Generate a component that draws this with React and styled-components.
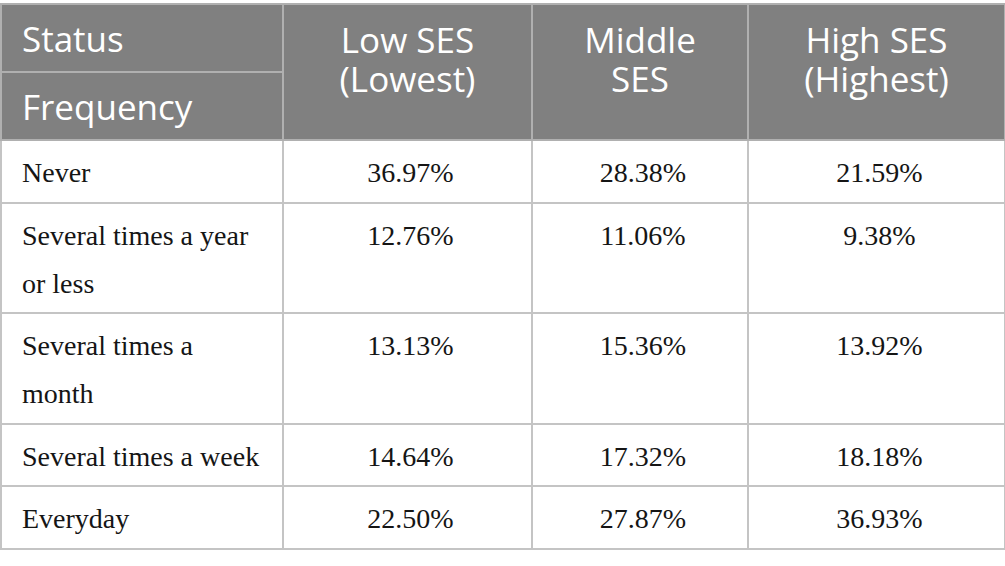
import React from 'react';
import styled, { createGlobalStyle } from 'styled-components';

const GlobalStyle = createGlobalStyle`
  html, body {
    margin: 0;
    padding: 0;
    background: #fff;
  }
`;

const Page = styled.div`
  width: 1005px;
  height: 566px;
  padding-top: 3px;
  box-sizing: border-box;
  background: #fff;
`;

const Table = styled.table`
  border-collapse: collapse;
  width: 1004px;
  table-layout: fixed;
`;

const HeadCell = styled.th`
  background: #808080;
  color: #fff;
  font-family: "Open Sans", sans-serif;
  font-weight: 400;
  font-size: 35px;
  line-height: 39px;
  border: 2px solid #b0b0b0;
  text-align: ${(p) => (p.$left ? 'left' : 'center')};
  vertical-align: top;
  padding: ${(p) => (p.$left ? '14px 20px 10px' : '15px 8px')};
  height: ${(p) => p.$h || 'auto'};
  box-sizing: border-box;
  white-space: nowrap;
`;

const HeadLine = styled.span`
  display: block;
`;

const Cell = styled.td`
  font-family: "Liberation Serif", "Times New Roman", serif;
  font-size: 28px;
  line-height: 48px;
  color: #151515;
  border: 2px solid #c4c4c4;
  text-align: ${(p) => (p.$left ? 'left' : 'center')};
  vertical-align: top;
  padding: 8px 14px 4.5px 20px;
`;

const heads = [
  ['Low SES', '(Lowest)'],
  ['Middle', 'SES'],
  ['High SES', '(Highest)'],
];

const rows = [
  ['Never', '36.97%', '28.38%', '21.59%'],
  ['Several times a year or less', '12.76%', '11.06%', '9.38%'],
  ['Several times a month', '13.13%', '15.36%', '13.92%'],
  ['Several times a week', '14.64%', '17.32%', '18.18%'],
  ['Everyday', '22.50%', '27.87%', '36.93%'],
];

export default function App() {
  return (
    <Page>
      <GlobalStyle />
      <Table>
        <colgroup>
          <col style={{ width: 282 }} />
          <col style={{ width: 249 }} />
          <col style={{ width: 216 }} />
          <col style={{ width: 257 }} />
        </colgroup>
        <thead>
          <tr>
            <HeadCell $left $h="68px">Status</HeadCell>
            {heads.map((h) => (
              <HeadCell key={h[0]} rowSpan={2}>
                <HeadLine>{h[0]}</HeadLine>
                <HeadLine>{h[1]}</HeadLine>
              </HeadCell>
            ))}
          </tr>
          <tr>
            <HeadCell $left $h="68px">Frequency</HeadCell>
          </tr>
        </thead>
        <tbody>
          {rows.map((r) => (
            <tr key={r[0]}>
              <Cell $left>{r[0]}</Cell>
              <Cell>{r[1]}</Cell>
              <Cell>{r[2]}</Cell>
              <Cell>{r[3]}</Cell>
            </tr>
          ))}
        </tbody>
      </Table>
    </Page>
  );
}
